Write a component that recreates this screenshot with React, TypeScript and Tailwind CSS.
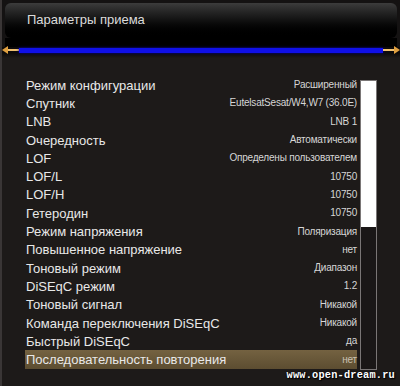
import React from "react";

interface Row {
  label: string;
  value: string;
}

const rows: Row[] = [
  { label: "Режим конфигурации", value: "Расширенный" },
  { label: "Спутник", value: "EutelsatSesat/W4,W7 (36.0E)" },
  { label: "LNB", value: "LNB 1" },
  { label: "Очередность", value: "Автоматически" },
  { label: "LOF", value: "Определены пользователем" },
  { label: "LOF/L", value: "10750" },
  { label: "LOF/H", value: "10750" },
  { label: "Гетеродин", value: "10750" },
  { label: "Режим напряжения", value: "Поляризация" },
  { label: "Повышенное напряжение", value: "нет" },
  { label: "Тоновый режим", value: "Диапазон" },
  { label: "DiSEqC режим", value: "1.2" },
  { label: "Тоновый сигнал", value: "Никакой" },
  { label: "Команда переключения DiSEqC", value: "Никакой" },
  { label: "Быстрый DiSEqC", value: "да" },
  { label: "Последовательность повторения", value: "нет" },
];

const Arrow = ({ flip }: { flip?: boolean }) => (
  <svg width="17" height="10" viewBox="0 0 17 10" className={flip ? "-scale-x-100" : ""}>
    <polygon points="0,5 6,1 6,9" fill="#e0a040" />
    <rect x="6" y="4" width="11" height="2" fill="#f0c070" />
  </svg>
);

export default function App() {
  return (
    <div
      className="w-[400px] h-[386px] bg-[#1d1a19] relative overflow-hidden border-l-2 border-[#3a3636]"
      style={{ fontFamily: '"Liberation Sans", Arial, sans-serif' }}
    >
      {/* header */}
      <div className="bg-[#141212] pt-[3px] px-[3px]">
        <div className="h-[35px] rounded-[6px] bg-gradient-to-b from-[#3c3c3c] via-[#111] to-black flex items-center pl-[22px] pb-[2px]">
          <span className="text-[13px] text-[#dcdcdc]">Параметры приема</span>
        </div>
        <div className="h-[9px] bg-black" />
      </div>
      <div className="flex items-center h-[6px] bg-[#0c0a0a]">
        <Arrow />
        <div className="flex-1 h-[5px] bg-[#1010e8] shadow-[0_0_3px_#0000a0]" />
        <Arrow flip />
      </div>
      <div className="h-[5px] bg-gradient-to-b from-[#0c0a0a] to-[#1d1a19]" />

      {/* list */}
      <div className="flex pt-[18px] pl-[23px]">
        <div className="w-[332px] flex flex-col">
          {rows.map((r, i) => (
            <div
              key={i}
              className={
                "h-[18.3px] flex items-center justify-between pl-[1px] " +
                (i === rows.length - 1 ? "bg-gradient-to-b from-[#746241] to-[#5c4d31]" : "")
              }
            >
              <span className="text-[13px] text-[#e8e8e8] whitespace-nowrap leading-none">{r.label}</span>
              <span
                className={
                  "text-[10px] tracking-[-0.2px] whitespace-nowrap leading-none " +
                  (i === rows.length - 1 ? "text-[#c8c0b0]" : "text-[#d6d6d6]")
                }
              >
                {r.value}
              </span>
            </div>
          ))}
        </div>
        <div className="ml-[3px] mt-[4px] w-[17px] h-[290px] border border-[#7a7676] bg-[#1a1717]">
          <div className="h-[146px] bg-white" />
        </div>
      </div>

      <div
        className="absolute right-[5px] bottom-[3px] text-[10.3px] font-bold text-white tracking-[0.2px]"
        style={{ fontFamily: '"Liberation Mono", monospace', textShadow: "0 0 2px #000, 1px 1px 1px #000" }}
      >
        www.open-dream.ru
      </div>
    </div>
  );
}
